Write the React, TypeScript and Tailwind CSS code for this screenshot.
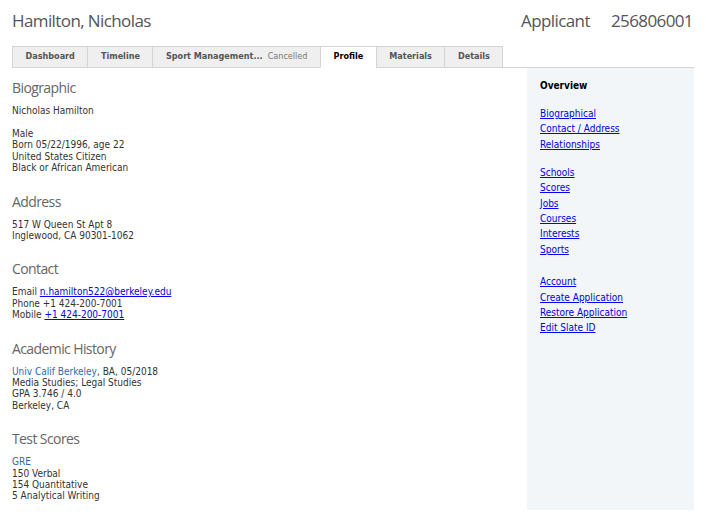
import React from "react";

const body = { fontFamily: '"DejaVu Sans Condensed", "DejaVu Sans", sans-serif' };
const head = { fontFamily: '"Open Sans", "Noto Sans", sans-serif' };

function Heading({ children }: { children: React.ReactNode }) {
  return (
    <div className="text-[14px] leading-[18px] tracking-[-0.6px] text-[#666] mb-[8px]" style={head}>
      {children}
    </div>
  );
}

function Tab({ label, extra, active }: { label: string; extra?: string; active?: boolean }) {
  return (
    <div
      className={
        "h-[22px] flex items-center justify-center px-[12.5px] border border-[#d4d4d4] -ml-px text-[9px] font-bold " +
        (active ? "bg-white border-b-white text-black" : "bg-[#efefef] text-[#555]")
      }
    >
      {label}
      {extra && <span className="font-normal text-[#777] ml-[5px]">{extra}</span>}
    </div>
  );
}

export default function App() {
  const links1 = ["Biographical", "Contact / Address", "Relationships"];
  const links2 = ["Schools", "Scores", "Jobs", "Courses", "Interests", "Sports"];
  const links3 = ["Account", "Create Application", "Restore Application", "Edit Slate ID"];
  return (
    <div className="w-[706px] h-[516px] bg-white px-[12px] overflow-hidden" style={body}>
      <div className="flex items-center justify-between h-[40px] pt-[1px]" style={head}>
        <div className="text-[17px] tracking-[-0.6px] text-[#555]">Hamilton, Nicholas</div>
        <div className="text-[17px] tracking-[-0.6px] text-[#555] flex gap-[21px] pr-[1px]">
          <span>Applicant</span>
          <span>256806001</span>
        </div>
      </div>
      <div className="mt-[6px] flex border-b border-[#d4d4d4] pl-px">
        <div className="flex -mb-px">
          <Tab label="Dashboard" />
          <Tab label="Timeline" />
          <Tab label="Sport Management..." extra="Cancelled" />
          <Tab label="Profile" active />
          <Tab label="Materials" />
          <Tab label="Details" />
        </div>
      </div>
      <div className="flex">
        <div className="flex-1 pt-[11px] text-[10px] leading-[11.4px] text-[#333]">
          <Heading>Biographic</Heading>
          <div className="mb-[11.5px]">Nicholas Hamilton</div>
          <div>Male</div>
          <div>Born 05/22/1996, age 22</div>
          <div>United States Citizen</div>
          <div>Black or African American</div>
          <div className="h-[19px]" />
          <Heading>Address</Heading>
          <div>517 W Queen St Apt 8</div>
          <div>Inglewood, CA 90301-1062</div>
          <div className="h-[19px]" />
          <Heading>Contact</Heading>
          <div>
            Email <a className="text-[#0000ee] underline">n.hamilton522@berkeley.edu</a>
          </div>
          <div>Phone +1 424-200-7001</div>
          <div>
            Mobile <a className="text-[#0000ee] underline">+1 424-200-7001</a>
          </div>
          <div className="h-[19px]" />
          <Heading>Academic History</Heading>
          <div>
            <span className="text-[#2a6bb0]">Univ Calif Berkeley</span>, BA, 05/2018
          </div>
          <div>Media Studies; Legal Studies</div>
          <div>GPA 3.746 / 4.0</div>
          <div>Berkeley, CA</div>
          <div className="h-[19px]" />
          <Heading>Test Scores</Heading>
          <div className="text-[#2a6bb0]">GRE</div>
          <div>150 Verbal</div>
          <div>154 Quantitative</div>
          <div>5 Analytical Writing</div>
        </div>
        <div className="w-[167px] h-[442px] bg-[#f2f6f9] pl-[13px] pt-[12px] text-[10px]">
          <div className="font-bold text-black leading-[12px] mb-[14px]">Overview</div>
          <div className="flex flex-col leading-[15.4px]">
            {links1.map((l) => (
              <a key={l} className="text-[#0000ee] underline">{l}</a>
            ))}
            <div className="h-[12.5px]" />
            {links2.map((l) => (
              <a key={l} className="text-[#0000ee] underline">{l}</a>
            ))}
            <div className="h-[17px]" />
            {links3.map((l) => (
              <a key={l} className="text-[#0000ee] underline">{l}</a>
            ))}
          </div>
        </div>
      </div>
    </div>
  );
}
